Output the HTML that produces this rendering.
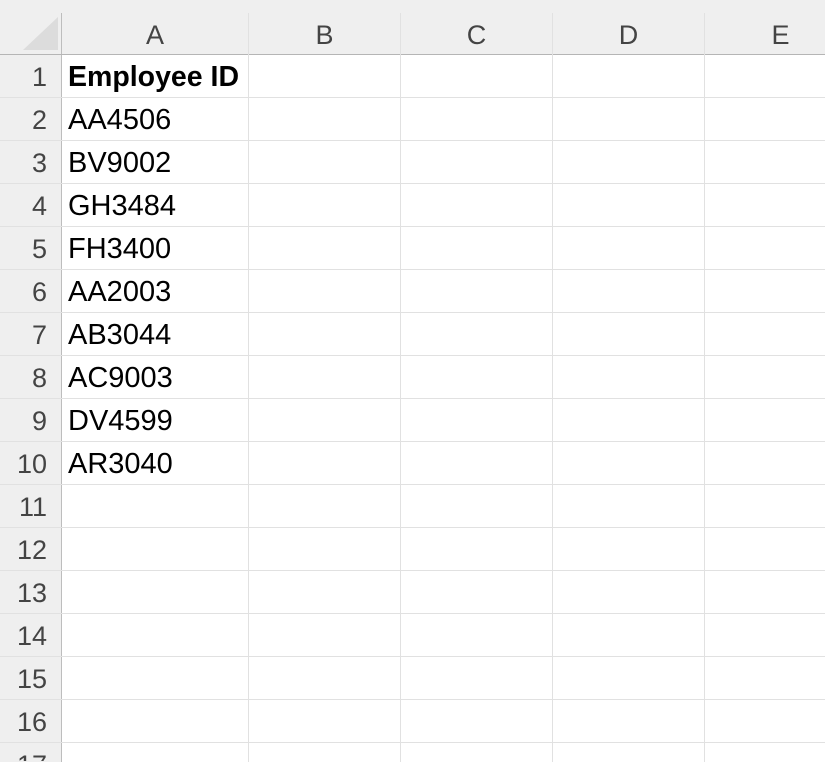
<!DOCTYPE html><html><head><style>
html,body{margin:0;width:825px;height:762px;overflow:hidden}
body{background:#fff;font-family:"Liberation Sans",sans-serif;position:relative}
.a{position:absolute}
.hl{position:absolute;height:1px;background:#e1e1e1}
.vl{position:absolute;width:1px;background:#e1e1e1}
.ch{position:absolute;top:14px;height:40px;line-height:42px;text-align:center;color:#444;font-size:27px}
.rh{position:absolute;left:0;width:47px;text-align:right;color:#444;font-size:27px;height:43px;line-height:46px}
.c{position:absolute;left:68px;font-size:29px;color:#000;height:43px;line-height:46px}
</style></head><body>
<div class="a" style="left:0;top:0;width:825px;height:54px;background:#efefef"></div>
<div class="a" style="left:0;top:0;width:61px;height:762px;background:#efefef"></div>
<svg class="a" style="left:0;top:0" width="62" height="55"><polygon points="23,50 58,50 58,17" fill="#dcdcdc"/></svg>
<div class="a" style="left:61px;top:13px;width:1px;height:749px;background:#bdbdbd"></div>
<div class="a" style="left:0;top:54px;width:825px;height:1px;background:#b5b5b5"></div>
<div class="vl" style="left:248px;top:13px;height:749px"></div>
<div class="vl" style="left:400px;top:13px;height:749px"></div>
<div class="vl" style="left:552px;top:13px;height:749px"></div>
<div class="vl" style="left:704px;top:13px;height:749px"></div>
<div class="ch" style="left:62px;width:186px">A</div>
<div class="ch" style="left:249px;width:151px">B</div>
<div class="ch" style="left:401px;width:151px">C</div>
<div class="ch" style="left:553px;width:151px">D</div>
<div class="ch" style="left:705px;width:151px">E</div>
<div id="g"></div>
<script>
var ids=["AA4506","BV9002","GH3484","FH3400","AA2003","AB3044","AC9003","DV4599","AR3040"],h="";
for(var i=0;i<17;i++){var t=54+i*43;
if(i<16)h+='<div class="hl" style="left:0;top:'+(t+43)+'px;width:825px"></div>';
h+='<div class="rh" style="top:'+t+'px;'+(i==16?'height:19px;overflow:hidden':'')+'">'+(i+1)+'</div>';
if(i==0)h+='<div class="c" style="top:'+t+'px;font-weight:bold;font-size:28.5px">Employee ID</div>';
else if(i<=9)h+='<div class="c" style="top:'+t+'px">'+ids[i-1]+'</div>';}
document.getElementById("g").innerHTML=h;
</script>
</body></html>
